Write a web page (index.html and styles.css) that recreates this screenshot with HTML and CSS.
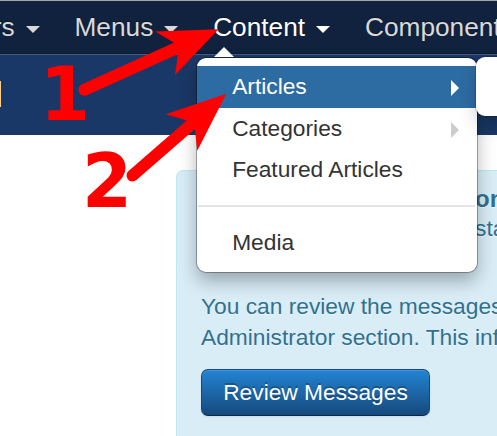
FILE: index.html
```html
<!DOCTYPE html>
<html lang="en">
<head>
<meta charset="utf-8">
<title>Control Panel</title>
<link rel="stylesheet" href="styles.css">
</head>
<body>
<nav class="navbar">
  <a class="nav-item">rs<i class="caret"></i></a>
  <a class="nav-item">Menus<i class="caret"></i></a>
  <div class="nav-item active">Content<i class="caret"></i>
    <div class="dropdown">
      <a class="menu-item selected">Articles<i class="chevron"></i></a>
      <a class="menu-item">Categories<i class="chevron"></i></a>
      <a class="menu-item featured">Featured Articles</a>
      <div class="divider"></div>
      <a class="menu-item">Media</a>
    </div>
    <div class="submenu"></div>
  </div>
  <a class="nav-item">Components</a>
</nav>
<header class="header"><div class="logo-edge"></div></header>
<main class="content">
  <section class="alert">
    <h4 class="alert-title">on</h4>
    <p class="lead">stallation</p>
    <p class="message">You can review the messages<br>Administrator section. This info</p>
    <button class="btn">Review Messages</button>
  </section>
</main>
<svg class="annotations" width="497" height="436" viewBox="0 0 497 436">
  <path class="shaft" d="M84.5 89.7 L180 46.5"/>
  <path d="M218.5 29.2 L155.3 31.4 L174 42.8 L178 54 L175 75 Z"/>
  <path class="shaft" d="M132.5 175.5 L194 122"/>
  <path d="M226.3 93.7 L165.8 114.3 L187 120.5 L195 130 L197.3 150.8 Z"/>
  <text x="40" y="120" textLength="50" lengthAdjust="spacingAndGlyphs">1</text>
  <text x="82" y="207" textLength="50" lengthAdjust="spacingAndGlyphs">2</text>
</svg>
</body>
</html>
```
FILE: styles.css
```css
* { box-sizing: border-box; }
body {
  margin: 0;
  width: 497px;
  height: 436px;
  overflow: hidden;
  position: relative;
  background: #fff;
  font: 22.75px/31.5px "Liberation Sans", Arial, sans-serif;
}
.navbar {
  display: flex;
  gap: 34.9px;
  height: 55px;
  background: #10223e;
  border-top: 1px solid #a3a5a3;
  border-bottom: 1px solid #485d80;
  box-shadow: inset 0 -1px #0c1a30;
  white-space: nowrap;
}
.nav-item {
  position: relative;
  display: flex;
  align-items: center;
  flex: none;
  height: 53px;
  font-size: 26.25px;
  color: #d9d9d9;
  text-shadow: 0 -1px 0 rgba(0, 0, 0, .4);
}
.nav-item:first-child { margin-left: -7.3px; }
.active { color: #fff; }
.caret {
  margin: 3px 0 0 11px;
  border: 7px solid transparent;
  border-top-color: currentColor;
  border-bottom: 0;
}
.dropdown {
  position: absolute;
  z-index: 2;
  top: 57px;
  left: -16px;
  width: 280px;
  height: 214px;
  padding-top: 8px;
  background: #fff;
  border-radius: 9px;
  box-shadow: 0 0 0 1px rgba(0, 0, 0, .3), 0 9px 18px rgba(0, 0, 0, .3);
}
.dropdown::before {
  content: "";
  position: absolute;
  top: -11px;
  left: 17px;
  border: 10px solid transparent;
  border-bottom-color: #fff;
  border-top: 0;
}
.menu-item {
  display: flex;
  justify-content: space-between;
  align-items: center;
  height: 42px;
  padding: 0 18px 0 35px;
  font-size: 22.75px;
  color: #333;
  text-shadow: none;
}
.featured { height: 40px; }
.selected { background: #2d6ca2; color: #fff; }
.chevron {
  margin-top: 2px;
  border: 8px solid transparent;
  border-left-color: #ccc;
  border-right: 0;
}
.selected .chevron { border-left-color: #fff; }
.divider {
  height: 2px;
  margin: 15px 2px 15px 1px;
  background: #e5e5e5;
}
.submenu {
  position: absolute;
  z-index: 3;
  top: 56px;
  left: 263px;
  width: 100px;
  height: 59px;
  background: #fff;
  border-radius: 9px;
  box-shadow: 0 0 0 1px rgba(0, 0, 0, .15), 0 9px 18px rgba(0, 0, 0, .2);
}
.header {
  height: 80px;
  padding-top: 26px;
  background: #1a3867;
}
.logo-edge {
  width: 1px;
  height: 26px;
  background: #fcd08c;
}
.content { padding: 35px 0 0 176px; }
.alert {
  width: 321px;
  height: 266px;
  padding: 13px 0 0 24px;
  overflow: hidden;
  background: #d9edf7;
  border: 1px solid #bce8f1;
  border-width: 1px 0 0 1px;
  border-radius: 7px 0 0 0;
  color: #31708f;
  text-shadow: 0 1px 0 rgba(255, 255, 255, .5);
  white-space: nowrap;
}
.alert-title, .lead, .message { margin: 0; }
.alert-title {
  padding-left: 274px;
  font-size: 24px;
  line-height: 29px;
}
.lead { padding-left: 274px; margin-bottom: 46px; }
.btn {
  display: block;
  margin-top: 15px;
  width: 229px;
  height: 47px;
  padding: 2px 0 0;
  font: inherit;
  color: #fff;
  background: linear-gradient(#2384d3, #15497c);
  border: 1px solid #15497c;
  border-bottom-color: #0b2846;
  border-radius: 7px;
  box-shadow: inset 0 1px rgba(255, 255, 255, .15), 0 1px 2px rgba(0, 0, 0, .08);
  text-shadow: 0 -2px 0 rgba(0, 0, 0, .25);
}
.annotations {
  position: absolute;
  z-index: 5;
  top: 0;
  left: 0;
  fill: #f00;
  font: bold 74.5px "DejaVu Sans", sans-serif;
}
.shaft { fill: none; stroke: #f00; stroke-width: 12; stroke-linecap: round; }
```
